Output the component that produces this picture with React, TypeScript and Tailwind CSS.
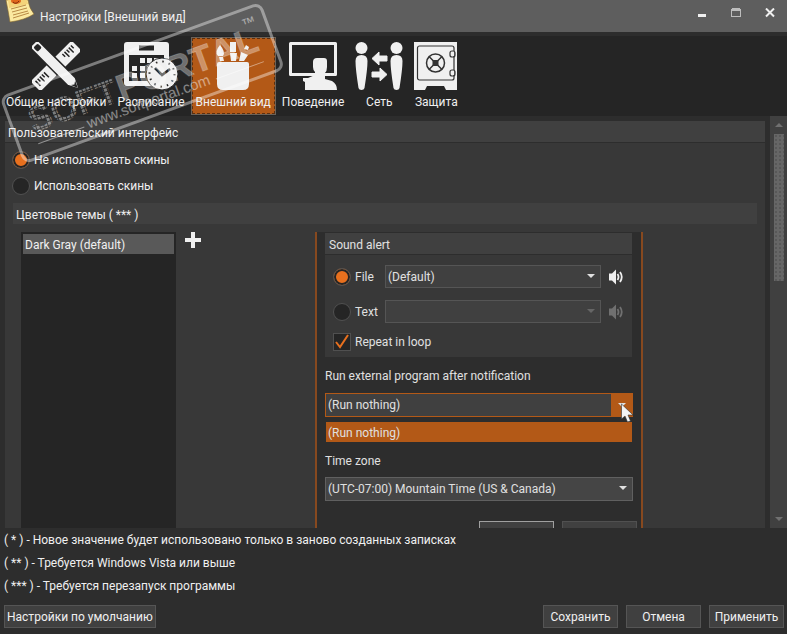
import { useState } from 'react';
import type { ReactNode } from 'react';

function NoteIcon() {
  return (
    <svg className="h-[23px] w-[30px]" viewBox="0 0 30 23" aria-hidden="true">
      <path d="M1 0 Q3 10 5 22 Q20 20 29 14 Q24 8 23 0Z" fill="#fbe9a0" stroke="#8a6a2a" strokeWidth=".6" />
      <path d="M3 0h19l1 4-19 4Z" fill="#f3d37a" />
      <path d="M6 9l15-4M7 12l15-4M8 15l15-4M8 18l16-5" stroke="#b98a45" strokeWidth="1" />
      <ellipse cx="11" cy="1" rx="5" ry="3" fill="#e0661d" />
      <path d="M8 2q3 3 6-1" stroke="#7b2d0c" fill="none" />
    </svg>
  );
}

function ToolsIcon() {
  return (
    <svg className="h-12 w-12" viewBox="0 0 48 48" aria-hidden="true">
      <g transform="rotate(45 24 24)">
        <rect x="17" y="-5" width="14" height="58" rx="2" fill="#f0f0f0" />
        <path d="M20 -1h4M20 2h7M20 5h4M20 8h7M20 11h4M20 37h7M20 40h4M20 43h7M20 46h4M20 49h7" stroke="#252525" strokeWidth="1.5" />
      </g>
      <g transform="rotate(-45 24 24)">
        <path d="M18.500 -5q0-3 3-3h5q3 0 3 3v51l-5.500 11-5.500-11z" fill="#f0f0f0" stroke="#252525" strokeWidth="1.5" />
        <rect x="21" y="-5" width="6" height="6" rx="1.500" fill="#252525" />
        <path d="M21 48l3 2 3-2-3 7z" fill="#252525" />
      </g>
    </svg>
  );
}

function CalendarIcon() {
  return (
    <svg className="h-12 w-[54px]" viewBox="0 0 54 48" aria-hidden="true">
      <path fillRule="evenodd" d="M3 0h39q3 0 3 3v38q0 3-3 3H3q-3 0-3-3V3q0-3 3-3zM5 13v26h35V13zM15 3.500v5h15v-5z" fill="#f0f0f0" />
      <path d="M16 16h5v5h-5zM23 16h5v5h-5zM30 16h5v5h-5zM8 24h5v5H8zM16 24h5v5h-5zM23 24h5v5h-5zM8 31h5v5H8zM16 31h5v5h-5z" fill="#f0f0f0" />
      <circle cx="38" cy="32" r="16" fill="#f0f0f0" stroke="#252525" strokeWidth="1" />
      <path d="M31 26l7 7 8-6" fill="none" stroke="#252525" strokeWidth="2.500" />
      <circle cx="38" cy="32" r="12.500" fill="none" stroke="#252525" strokeWidth="2" strokeDasharray="1.500 5.040" />
    </svg>
  );
}

function BrushesIcon() {
  return (
    <svg className="h-12 w-12" viewBox="0 0 48 48" aria-hidden="true">
      <path d="M10 20h28q2 0 2 2v20q0 6-6 6H14q-6 0-6-6V22q0-2 2-2z" fill="#f0f0f0" />
      <path d="M11 3q-6 7-2 11h5q3-4-3-11zM10 15h4l1 4h-4zM21 0h6v10h-6zM21 11h7l-1 8h-5zM32 10l7 3-4 6h-5zM35 7l2-4 3 2-1 3z" fill="#f0f0f0" />
    </svg>
  );
}

function BehaviorIcon() {
  return (
    <svg className="h-12 w-12" viewBox="0 0 48 48" aria-hidden="true">
      <path fillRule="evenodd" d="M1.500 0h45q1.500 0 1.500 1.500v31q0 1.500-1.500 1.500h-45Q0 34 0 32.500v-31Q0 0 1.500 0zM3 3v28h42V3z" fill="#f0f0f0" />
      <path d="M28 16h7q3 0 3 3v6q0 4-2 6v6l7 2q5 3 5 9H16v-8l-2-1v-3h5l7-3v-3q-2-2-2-5v-5q0-4 4-4z" fill="#f0f0f0" />
    </svg>
  );
}

function NetworkIcon() {
  return (
    <svg className="h-12 w-12" viewBox="0 0 48 48" aria-hidden="true">
      <g fill="#f0f0f0">
        <circle cx="6.500" cy="6" r="6" />
        <circle cx="41.500" cy="6" r="6" />
        <path d="M6.500 13q6 0 6 6 0 8-3 27-.500 2-3 2t-3-2Q.500 27 .500 19q0-6 6-6zM41.500 13q6 0 6 6 0 8-3 27-.500 2-3 2t-3-2q-3-19-3-27 0-6 6-6z" />
        <path d="M17 16.500l7-6.500v4h8v5h-8v4zM32 32.500L25 26v4h-8v5h8v4z" stroke="#f0f0f0" strokeLinejoin="round" />
      </g>
    </svg>
  );
}

function SafeIcon() {
  return (
    <svg className="h-12 w-11" viewBox="0 0 44 48" aria-hidden="true">
      <path d="M0 0h43v48H32l-2-4H13l-2 4H0z" fill="#f0f0f0" />
      <rect x="3.500" y="4" width="36.500" height="34" rx="2" fill="none" stroke="#333" strokeWidth="1.200" />
      <path d="M38 9h2v5h-2zM38 28h2v5h-2z" fill="#f0f0f0" />
      <rect x="36" y="9" width="5" height="6" rx="2" fill="none" stroke="#333" strokeWidth="1.200" />
      <rect x="36" y="28" width="5" height="6" rx="2" fill="none" stroke="#333" strokeWidth="1.200" />
      <circle cx="21.500" cy="21" r="9" fill="none" stroke="#333" strokeWidth="1.500" />
      <path d="M15 14.500l13 13M28 14.500l-13 13" stroke="#333" strokeWidth="1.500" />
      <rect x="18.500" y="18" width="6" height="6" fill="#333" />
    </svg>
  );
}

function Arrow({ className }: { className: string }) {
  return (
    <svg className={className} viewBox="0 0 8 4" aria-hidden="true">
      <path d="M0 0h8L4 4z" fill="currentColor" />
    </svg>
  );
}

function SpeakerIcon() {
  return (
    <svg className="h-4 w-4" viewBox="0 0 16 16" aria-hidden="true">
      <path d="M1 4.500h3l4-4v15l-4-4H1z" fill="currentColor" />
      <path d="M9.500 5q2 3 0 6M12 3q3.500 5 0 10" fill="none" stroke="currentColor" strokeWidth="1.800" />
    </svg>
  );
}

function Watermark() {
  return (
    <svg className="pointer-events-none absolute left-0 top-0 h-[170px] w-[290px]" viewBox="0 0 290 170" fontFamily="Liberation Sans, sans-serif">
      <defs>
        <pattern id="dots" width="4" height="4" patternUnits="userSpaceOnUse">
          <rect width="3" height="3" fill="#fff" />
        </pattern>
      </defs>
      <g transform="translate(0 97) rotate(-20)" fill="#fff">
        <rect x="1" y="1" width="275" height="69" rx="7" fill="none" stroke="#fff" strokeOpacity=".4" strokeWidth="3" />
        <text x="19" y="45" fontSize="35" fontWeight="700" fill="url(#dots)" opacity=".4">SOFT</text>
        <text x="113" y="45" fontSize="36" fontWeight="700" fillOpacity=".35" stroke="#fff" strokeOpacity=".2" style={{ fontKerning: 'none' }}>PORTAL</text>
        <text x="252" y="20" fontSize="14" opacity=".5">™</text>
        <text x="73" y="60" fontSize="15" opacity=".45">www.softportal.com</text>
        <path d="M20 57h49M209 57h51" stroke="#fff" strokeOpacity=".45" />
      </g>
    </svg>
  );
}

const tabs: { title: string; icon: ReactNode }[] = [
  { title: 'Общие настройки', icon: <ToolsIcon /> },
  { title: 'Расписание', icon: <CalendarIcon /> },
  { title: 'Внешний вид', icon: <BrushesIcon /> },
  { title: 'Поведение', icon: <BehaviorIcon /> },
  { title: 'Сеть', icon: <NetworkIcon /> },
  { title: 'Защита', icon: <SafeIcon /> },
];

const hints = [
  '( * ) - Новое значение будет использовано только в заново созданных записках',
  '( ** ) - Требуется Windows Vista или выше',
  '( *** ) - Требуется перезапуск программы',
];

const radioClass =
  'h-[18px] w-[18px] shrink-0 appearance-none rounded-full border border-[#505050] bg-[#252525] checked:bg-[#e8701e] checked:shadow-[inset_0_0_0_2px_#252525]';
const buttonClass = 'h-[23px] border border-[#555] bg-[#404040]';

function Preview() {
  const [source, setSource] = useState('file');

  return (
    <div className="w-[328px] shrink-0 border-x-2 border-[#87491f] bg-[#2d2d2d] pl-2 pr-2 pt-px text-[#e0e0e0]">
      <div className="mr-px bg-[#383838] pb-1.5">
        <h3 className="h-[22px] border-b border-[#2d2d2d] bg-[#404040] pl-1 leading-6">Sound alert</h3>
        <div className="flex flex-col gap-3 pl-2 pr-2 pt-2.5">
          <div className="flex h-[23px] items-center">
            <label className="flex w-[52px] shrink-0 items-center gap-1">
              <input type="radio" name="source" className={radioClass} checked={source === 'file'} onChange={() => setSource('file')} />
              File
            </label>
            <div className="relative flex-1">
              <select aria-label="File" className="block h-[23px] w-full appearance-none border border-[#555] bg-[#404040] pl-0.5">
                <option>(Default)</option>
              </select>
              <Arrow className="pointer-events-none absolute right-1.5 top-[9px] h-1 w-2" />
            </div>
            <button type="button" aria-label="Play file" className="ml-[7px] text-[#f0f0f0]"><SpeakerIcon /></button>
          </div>
          <div className="flex h-[23px] items-center">
            <label className="flex w-[52px] shrink-0 items-center gap-1">
              <input type="radio" name="source" className={radioClass} checked={source === 'text'} onChange={() => setSource('text')} />
              Text
            </label>
            <div className="relative flex-1 text-[#666]">
              <select aria-label="Text" disabled className="block h-[23px] w-full appearance-none border border-[#555] bg-[#404040] pl-0.5" />
              <Arrow className="pointer-events-none absolute right-1.5 top-[9px] h-1 w-2" />
            </div>
            <button type="button" aria-label="Play text" disabled className="ml-[7px] text-[#707070]"><SpeakerIcon /></button>
          </div>
          <label className="relative -mt-0.5 flex h-[18px] items-center gap-1">
            <input type="checkbox" defaultChecked className="peer h-[18px] w-[18px] appearance-none border border-[#505050] bg-[#252525]" />
            <svg className="pointer-events-none absolute left-0.5 top-px hidden h-4 w-4 peer-checked:block" viewBox="0 0 16 16" aria-hidden="true">
              <path d="M1 8l4 5L13 1" fill="none" stroke="#e8701e" strokeWidth="2" />
            </svg>
            Repeat in loop
          </label>
        </div>
      </div>

      <label htmlFor="program" className="mt-2 block h-5 leading-[22px]">Run external program after notification</label>
      <div className="relative mt-2">
        <select id="program" className="block h-6 w-full appearance-none border border-[#b35917] bg-[#404040] pl-0.5">
          <option>(Run nothing)</option>
        </select>
        <div className="pointer-events-none absolute right-0 top-0 flex h-6 w-[22px] items-center justify-center bg-[#b35917]">
          <Arrow className="h-1 w-2" />
        </div>
        <ul role="listbox" aria-label="Programs" className="absolute left-0 right-0 top-7 border border-dotted border-[#2d2d2d] bg-[#b35917] bg-clip-padding">
          <li role="option" aria-selected="true" className="h-5 pl-0.5 leading-[22px]">(Run nothing)</li>
        </ul>
        <svg className="pointer-events-none absolute right-0 top-2.5 h-5 w-3" viewBox="0 0 12 20" aria-hidden="true">
          <path d="M.5 1v15l3.500-3 2.500 6 3-1-2.500-6H12z" fill="#f4f4f4" stroke="#333" strokeWidth=".6" />
        </svg>
      </div>
      <label htmlFor="zone" className="mt-8 block h-5 pt-0.5 leading-5">Time zone</label>
      <div className="relative mt-2">
        <select id="zone" className="block h-6 w-full appearance-none border border-[#606060] bg-[#454545] pl-0.5">
          <option>(UTC-07:00) Mountain Time (US &amp; Canada)</option>
        </select>
        <Arrow className="pointer-events-none absolute right-1.5 top-[9px] h-1 w-2" />
      </div>
      <div className="-mr-1 mt-5 flex justify-end gap-2">
        <button type="button" aria-label="OK" className="h-6 w-[75px] border border-[#a0a0a0] bg-[#404040]" />
        <button type="button" aria-label="Cancel" className="h-6 w-[75px] border border-[#505050] bg-[#404040]" />
      </div>
    </div>
  );
}

export default function App() {
  const [active, setActive] = useState('Внешний вид');
  const [skins, setSkins] = useState(false);

  return (
    <div className="relative flex h-screen flex-col overflow-hidden bg-[#2d2d2d] font-['Roboto','Noto_Sans',sans-serif] text-[12px] text-[#f0f0f0]">
      <header className="flex h-8 shrink-0 items-start bg-[#5e5e5e] pl-[5px] pr-3">
        <NoteIcon />
        <h1 className="ml-[5px] flex-1 pt-2 leading-[18px]">Настройки [Внешний вид]</h1>
        <div className="flex gap-6 pt-2">
          <button type="button" aria-label="Свернуть" className="h-2.5 w-2.5">
            <svg viewBox="0 0 10 10"><path d="M1 6h8v3H1z" fill="#f0f0f0" /></svg>
          </button>
          <button type="button" aria-label="Развернуть" className="h-2.5 w-2.5">
            <svg viewBox="0 0 10 10"><path fillRule="evenodd" d="M1 0h8v1h1v8H0V1h1zM1 3v5h8V3z" fill="#bdbdbd" /></svg>
          </button>
          <button type="button" aria-label="Закрыть" className="h-2.5 w-2.5">
            <svg viewBox="0 0 10 10"><path d="M1 .5l8 8M9 .5l-8 8" stroke="#f0f0f0" strokeWidth="2" /></svg>
          </button>
        </div>
      </header>

      <nav className="mt-1 flex h-20 shrink-0 gap-px bg-[#252525] pl-px pt-px">
        {tabs.map((tab) => (
          <button
            key={tab.title}
            type="button"
            onClick={() => setActive(tab.title)}
            className={`flex h-[78px] flex-col items-center border px-1 pt-1 ${
              active === tab.title
                ? 'border-[#6b6259] bg-[#b35917] outline-1 -outline-offset-2 outline-dashed outline-[#5c3010]'
                : 'border-transparent'
            }`}
          >
            {tab.icon}
            <span className="mt-0.5 whitespace-nowrap leading-5">{tab.title}</span>
          </button>
        ))}
      </nav>

      <main className="flex min-h-0 flex-1 justify-between">
        <section className="ml-[5px] mr-[5px] mt-[5px] flex min-w-0 flex-1 flex-col bg-[#383838]">
          <h2 className="h-[22px] shrink-0 border-b border-[#2d2d2d] bg-[#404040] pl-[3px] leading-6">Пользовательский интерфейс</h2>
          <div className="flex min-h-0 flex-1 flex-col px-2 pt-2">
            <label className="-ml-px flex h-[18px] shrink-0 items-center gap-1">
              <input type="radio" name="skins" className={radioClass} checked={!skins} onChange={() => setSkins(false)} />
              Не использовать скины
            </label>
            <label className="-ml-px mt-2 flex h-[18px] shrink-0 items-center gap-1">
              <input type="radio" name="skins" className={radioClass} checked={skins} onChange={() => setSkins(true)} />
              Использовать скины
            </label>
            <h3 className="mt-2 h-[21px] shrink-0 bg-[#404040] pl-[3px] leading-6">Цветовые темы ( *** )</h3>
            <div className="mt-2 flex min-h-0 flex-1 overflow-hidden pl-2">
              <ul role="listbox" aria-label="Цветовые темы" className="w-[155px] shrink-0 bg-[#252525] p-0.5">
                <li role="option" aria-selected="true" className="h-5 bg-[#595959] pl-0.5 leading-[22px]">Dark Gray (default)</li>
              </ul>
              <button type="button" aria-label="Добавить тему" className="ml-[9px] h-4 w-4">
                <svg viewBox="0 0 16 16"><path d="M6 0h4v6h6v4h-6v6H6v-6H0V6h6z" fill="#f0f0f0" /></svg>
              </button>
              <div className="flex flex-1 justify-center">
                <Preview />
              </div>
            </div>
          </div>
        </section>
        <div className="flex w-[17px] shrink-0 flex-col items-center bg-[#404040] text-[#707070]">
          <button type="button" aria-label="Вверх" className="flex h-[18px] w-full items-center justify-center">
            <Arrow className="h-1 w-2 rotate-180" />
          </button>
          <div className="w-2.5 flex-1">
            <div className="h-[39%] bg-[#666] bg-[radial-gradient(#585858_1px,transparent_1px)] bg-[size:4px_4px]" />
          </div>
          <button type="button" aria-label="Вниз" className="flex h-[18px] w-full items-center justify-center">
            <Arrow className="h-1 w-2" />
          </button>
        </div>
      </main>

      <footer className="shrink-0 pb-1.5 pl-1 pr-[3px]">
        {hints.map((hint) => (
          <p key={hint} className="h-[23px] leading-6">{hint}</p>
        ))}
        <div className="mt-2 flex gap-2">
          <button type="button" className={`${buttonClass} mr-auto px-0.5`}>Настройки по умолчанию</button>
          <button type="button" className={`${buttonClass} w-[75px]`}>Сохранить</button>
          <button type="button" className={`${buttonClass} w-[75px]`}>Отмена</button>
          <button type="button" className={`${buttonClass} w-[75px]`}>Применить</button>
        </div>
      </footer>

      <Watermark />
    </div>
  );
}
